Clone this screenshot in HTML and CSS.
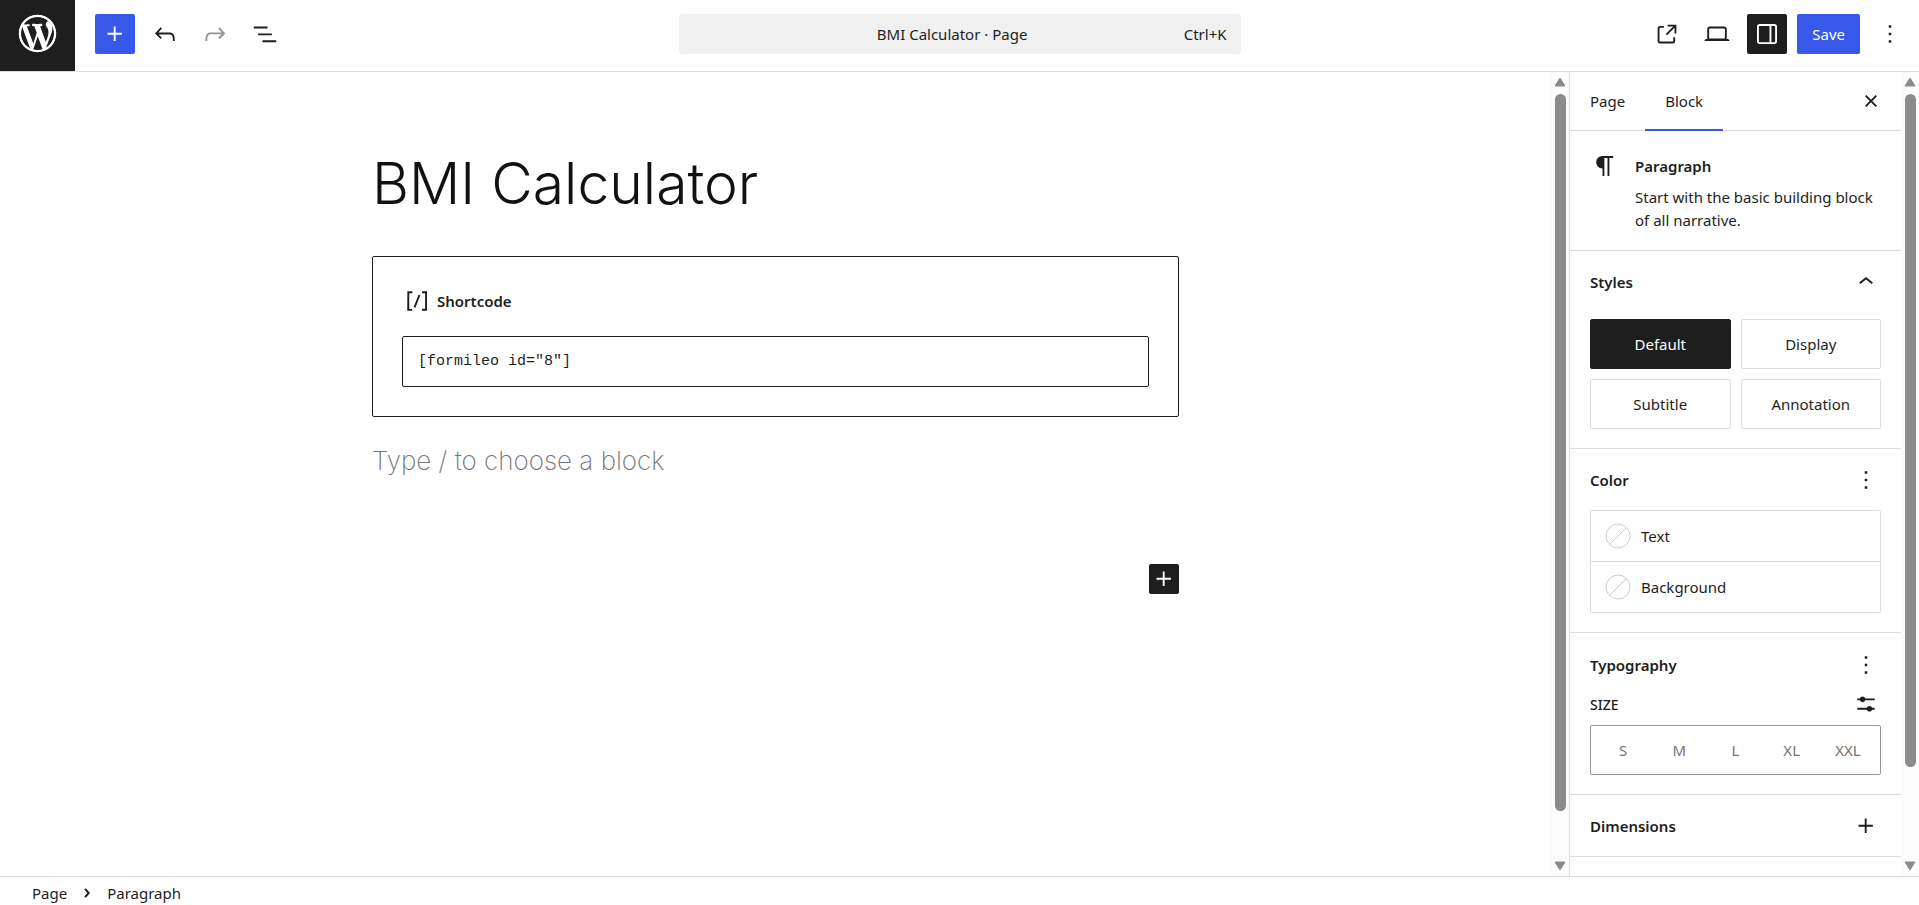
FILE: index.html
```html
<!DOCTYPE html>
<html lang="en">
<head>
    <meta charset="UTF-8">
    <meta name="viewport" content="width=device-width, initial-scale=1.0">
    <title>Edit Page - BMI Calculator</title>
    <link rel="stylesheet" href="styles.css">
</head>
<body>
    <header class="header">
        <div class="header-left">
            <a class="site-logo" href="#" aria-label="View Pages">
                <svg viewBox="-2 -2 24 24"><path d="M20 10c0-5.51-4.49-10-10-10C4.48 0 0 4.49 0 10c0 5.52 4.48 10 10 10 5.51 0 10-4.48 10-10zM7.78 15.37L4.37 6.22c.55-.02 1.17-.08 1.17-.08.5-.06.44-1.13-.06-1.11 0 0-1.45.11-2.37.11-.18 0-.37 0-.58-.01C4.12 2.69 6.87 1.11 10 1.11c2.33 0 4.45.87 6.05 2.34-.68-.11-1.65.39-1.65 1.58 0 .74.45 1.36.9 2.1.35.61.55 1.36.55 2.46 0 1.49-1.4 5-1.4 5l-3.03-8.37c.54-.02.82-.17.82-.17.5-.05.44-1.25-.06-1.22 0 0-1.44.12-2.38.12-.87 0-2.33-.12-2.33-.12-.5-.03-.56 1.2-.06 1.22l.92.08 1.26 3.41zM17.41 10c.24-.64.74-1.87.43-4.25.7 1.29 1.05 2.71 1.05 4.25 0 3.29-1.73 6.24-4.4 7.78.97-2.59 1.94-5.2 2.92-7.78zM6.1 18.09C3.12 16.65 1.11 13.53 1.11 10c0-1.3.23-2.48.72-3.59C3.25 10.3 4.67 14.2 6.1 18.09zm4.03-6.63l2.58 6.98c-.86.29-1.76.45-2.71.45-.79 0-1.57-.11-2.29-.33.81-2.38 1.62-4.74 2.42-7.1z"/><circle class="logo-ring" cx="10" cy="10" r="9.3"/></svg>
            </a>
            <div class="toolbar">
                <button class="icon-btn primary" aria-label="Block Inserter">
                    <svg viewBox="0 0 24 24"><path d="M11 12.5V17.5H12.5V12.5H17.5V11H12.5V6H11V11H6V12.5H11Z"/></svg>
                </button>
                <button class="icon-btn" aria-label="Undo">
                    <svg viewBox="0 0 24 24"><path d="M18.3 11.7c-.6-.6-1.4-.9-2.3-.9H6.7l2.9-3.3-1.1-1-4.5 5L8.5 16l1-1-2.7-2.7H16c.5 0 .9.2 1.3.5 1 1 1 3.4 1 4.5v.3h1.5v-.2c0-1.5 0-4.3-1.5-5.7z"/></svg>
                </button>
                <button class="icon-btn" aria-label="Redo" disabled>
                    <svg viewBox="0 0 24 24"><path d="M15.6 6.5l-1.1 1 2.9 3.3H8c-.9 0-1.7.3-2.3.9-1.4 1.5-1.4 4.2-1.4 5.6v.2h1.5v-.3c0-1.1 0-3.5 1-4.5.3-.3.7-.5 1.3-.5h9.2L14.5 15l1.1 1.1 4.6-4.6-4.6-5z"/></svg>
                </button>
                <button class="icon-btn" aria-label="Document Overview">
                    <svg viewBox="0 0 24 24"><path d="M3 6h11v1.5H3V6Zm3.5 5.5h11V13h-11v-1.5ZM21 17H10v1.5h11V17Z"/></svg>
                </button>
            </div>
        </div>

        <button class="document-bar">
            <span class="document-title">BMI Calculator · Page</span>
            <span>Ctrl+K</span>
        </button>

        <div class="header-right">
            <button class="icon-btn" aria-label="View Page">
                <svg viewBox="0 0 24 24"><path d="M19.5 4.5h-7V6h4.44l-5.97 5.97 1.06 1.06L18 7.06v4.44h1.5v-7Zm-13 1a2 2 0 0 0-2 2v10a2 2 0 0 0 2 2h10a2 2 0 0 0 2-2v-3H17v3a.5.5 0 0 1-.5.5h-10a.5.5 0 0 1-.5-.5v-10a.5.5 0 0 1 .5-.5h3V5.5h-3Z"/></svg>
            </button>
            <button class="icon-btn" aria-label="View">
                <svg viewBox="0 0 24 24"><path d="M20.5 16h-.7V8c0-1.1-.9-2-2-2H6.2c-1.1 0-2 .9-2 2v8h-.7c-.8 0-1.5.7-1.5 1.5h20c0-.8-.7-1.5-1.5-1.5zM5.7 8c0-.3.2-.5.5-.5h11.6c.3 0 .5.2.5.5v7.6H5.7V8z"/></svg>
            </button>
            <button class="icon-btn pressed" aria-label="Settings" aria-pressed="true">
                <svg viewBox="0 0 24 24"><path d="M18 4H6c-1.1 0-2 .9-2 2v12c0 1.1.9 2 2 2h12c1.1 0 2-.9 2-2V6c0-1.1-.9-2-2-2zm-4 14.5H6c-.3 0-.5-.2-.5-.5V6c0-.3.2-.5.5-.5h8v13zm4.5-.5c0 .3-.2.5-.5.5h-2.5v-13H18c.3 0 .5.2.5.5v12z"/></svg>
            </button>
            <button class="save-btn">Save</button>
            <button class="icon-btn" aria-label="Options">
                <svg viewBox="0 0 24 24"><path d="M13 19h-2v-2h2v2zm0-6h-2v-2h2v2zm0-6h-2V5h2v2z"/></svg>
            </button>
        </div>
    </header>

    <div class="body">
        <main class="editor">
            <div class="canvas">
                <div class="content">
                    <h1 class="post-title">BMI Calculator</h1>
                    <div class="shortcode">
                        <label class="shortcode-label" for="shortcode-input">
                            <svg viewBox="0 0 24 24"><path d="M16 4.2v1.5h2.5v12.5H16v1.5h4V4.2h-4zM4.2 19.8h4v-1.5H5.8V5.8h2.5V4.2h-4l-.1 15.6zm5.1-3.1l1.4.6 4-10-1.4-.6-4 10z"/></svg>
                            Shortcode
                        </label>
                        <input class="shortcode-input" id="shortcode-input" type="text" value='[formileo id="8"]'>
                    </div>
                    <p class="placeholder">Type / to choose a block</p>
                    <button class="appender" aria-label="Add block">
                        <svg viewBox="0 0 24 24"><path d="M11 12.5V17.5H12.5V12.5H17.5V11H12.5V6H11V11H6V12.5H11Z"/></svg>
                    </button>
                </div>
            </div>
            <div class="scrollbar" aria-hidden="true">
                <svg viewBox="0 0 12 10"><path d="M6 1L11 9H1z"/></svg>
                <div class="track"><div class="thumb" style="height: 94.3%"></div></div>
                <svg viewBox="0 0 12 10"><path d="M6 9L11 1H1z"/></svg>
            </div>
        </main>

        <aside class="sidebar">
            <div class="sidebar-content">
                <div class="tabs" role="tablist">
                    <button class="tab" role="tab">Page</button>
                    <button class="tab active" role="tab" aria-selected="true">Block</button>
                    <button class="small-btn close" aria-label="Close Settings">
                        <svg viewBox="0 0 24 24"><path d="M12 13.06l3.712 3.713 1.061-1.06L13.061 12l3.712-3.712-1.06-1.06L12 10.938 8.288 7.227l-1.061 1.06L10.939 12l-3.712 3.712 1.06 1.061L12 13.061z"/></svg>
                    </button>
                </div>

                <section class="block-card">
                    <svg viewBox="0 0 24 24"><path d="m9.99609 14v-.2251l.00391.0001v6.225h1.5v-14.5h2.5v14.5h1.5v-14.5h3v-1.5h-8.50391c-2.76142 0-5 2.23858-5 5 0 2.7614 2.23858 5 5 5z"/></svg>
                    <div>
                        <h2 class="heading">Paragraph</h2>
                        <p class="description">Start with the basic building block of all narrative.</p>
                    </div>
                </section>

                <section class="panel">
                    <div class="panel-header">
                        <h2 class="heading">Styles</h2>
                        <button class="small-btn" aria-label="Toggle styles" aria-expanded="true">
                            <svg viewBox="0 0 24 24"><path d="M6.5 12.4L12 8l5.5 4.4-.9 1.2L12 10l-4.5 3.6-1-1.2z"/></svg>
                        </button>
                    </div>
                    <div class="style-grid">
                        <button class="style-btn selected">Default</button>
                        <button class="style-btn">Display</button>
                        <button class="style-btn">Subtitle</button>
                        <button class="style-btn">Annotation</button>
                    </div>
                </section>

                <section class="panel">
                    <div class="panel-header">
                        <h2 class="heading">Color</h2>
                        <button class="small-btn" aria-label="Color options">
                            <svg viewBox="0 0 24 24"><path d="M13 19h-2v-2h2v2zm0-6h-2v-2h2v2zm0-6h-2V5h2v2z"/></svg>
                        </button>
                    </div>
                    <div class="color-list">
                        <button class="color-item">
                            <svg viewBox="0 0 26 26"><circle cx="13" cy="13" r="12"/><path d="M5 21L21 5"/></svg>
                            Text
                        </button>
                        <button class="color-item">
                            <svg viewBox="0 0 26 26"><circle cx="13" cy="13" r="12"/><path d="M5 21L21 5"/></svg>
                            Background
                        </button>
                    </div>
                </section>

                <section class="panel">
                    <div class="panel-header compact">
                        <h2 class="heading">Typography</h2>
                        <button class="small-btn" aria-label="Typography options">
                            <svg viewBox="0 0 24 24"><path d="M13 19h-2v-2h2v2zm0-6h-2v-2h2v2zm0-6h-2V5h2v2z"/></svg>
                        </button>
                    </div>
                    <div class="size-header">
                        <h3 class="size-label">SIZE</h3>
                        <button class="small-btn" aria-label="Set custom size">
                            <svg viewBox="0 0 24 24"><path d="m19 7.5h-7.628c-.3089-.87389-1.1423-1.5-2.122-1.5-.97966 0-1.81309.62611-2.12197 1.5h-2.12803v1.5h2.12803c.30888.87389 1.14231 1.5 2.12197 1.5.9797 0 1.8131-.62611 2.122-1.5h7.628z"/><path d="m19 15h-2.128c-.3089-.8739-1.1423-1.5-2.122-1.5s-1.8131.6261-2.122 1.5h-7.628v1.5h7.628c.3089.8739 1.1423 1.5 2.122 1.5s1.8131-.6261 2.122-1.5h2.128z"/></svg>
                        </button>
                    </div>
                    <div class="size-group">
                        <button class="size-btn">S</button>
                        <button class="size-btn">M</button>
                        <button class="size-btn">L</button>
                        <button class="size-btn">XL</button>
                        <button class="size-btn">XXL</button>
                    </div>
                </section>

                <section class="panel collapsed">
                    <div class="panel-header">
                        <h2 class="heading">Dimensions</h2>
                        <button class="small-btn" aria-label="Dimensions options">
                            <svg viewBox="0 0 24 24"><path d="M11 12.5V17.5H12.5V12.5H17.5V11H12.5V6H11V11H6V12.5H11Z"/></svg>
                        </button>
                    </div>
                </section>
            </div>
            <div class="scrollbar" aria-hidden="true">
                <svg viewBox="0 0 12 10"><path d="M6 1L11 9H1z"/></svg>
                <div class="track"><div class="thumb" style="height: 88.5%"></div></div>
                <svg viewBox="0 0 12 10"><path d="M6 9L11 1H1z"/></svg>
            </div>
        </aside>
    </div>

    <footer class="footer">
        <a class="crumb" href="#">Page</a>
        <svg viewBox="0 0 24 24"><path d="M10.8 7.2L15 12l-4.2 4.8-1.5-1.3L12.400 12 9.300 8.500z"/></svg>
        <span class="crumb">Paragraph</span>
    </footer>
</body>
</html>
```
FILE: styles.css
```css
* {
    box-sizing: border-box;
}
body {
    margin: 0;
    height: 100vh;
    display: flex;
    flex-direction: column;
    overflow: hidden;
    background: #fff;
    color: #1e1e1e;
    font-family: "Noto Sans", "Open Sans", sans-serif;
    font-size: 15px;
    line-height: 23px;
}
button {
    padding: 0;
    border: none;
    border-radius: 2px;
    background: none;
    color: inherit;
    font: inherit;
    cursor: pointer;
}
svg {
    display: block;
    flex: none;
    width: 30px;
    height: 30px;
    fill: currentColor;
}
h1, h2, h3, p {
    margin: 0;
}

/* Header */
.header {
    display: grid;
    grid-template-columns: 1fr 562px 1fr;
    height: 72px;
    flex: none;
    border-bottom: 1px solid #ddd;
}
.header-left {
    display: flex;
}
.site-logo {
    display: flex;
    justify-content: center;
    width: 75px;
    padding-top: 11px;
    background: #1e1e1e;
    color: #fff;
}
.site-logo svg {
    width: 45px;
    height: 45px;
}
.logo-ring {
    fill: none;
    stroke: currentColor;
}
.toolbar {
    display: flex;
    gap: 10px;
    padding: 14px 20px;
}
.icon-btn {
    display: flex;
    align-items: center;
    justify-content: center;
    width: 40px;
    height: 40px;
}
.icon-btn:disabled {
    color: #949494;
}
.icon-btn.primary,
.save-btn {
    background: #3858e9;
    color: #fff;
}
.icon-btn.pressed {
    background: #1e1e1e;
    color: #fff;
}
.document-bar {
    display: flex;
    align-items: center;
    height: 40px;
    margin-top: 14px;
    padding: 0 14px 0 42px;
    border-radius: 4px;
    background: #f0f0f0;
}
.document-title {
    flex: 1;
}
.header-right {
    display: flex;
    justify-content: flex-end;
    gap: 10px;
    padding: 14px 9px;
}
.save-btn {
    height: 40px;
    padding: 0 15px;
}

/* Editor */
.body {
    display: flex;
    flex: 1;
    min-height: 0;
}
.editor {
    display: flex;
    flex: 1;
    min-width: 0;
}
.canvas {
    flex: 1;
    padding: 76px 20px 0;
}
.content {
    display: flex;
    flex-direction: column;
    max-width: 807px;
    margin: 0 auto;
}
.post-title {
    margin-bottom: 36px;
    color: #111;
    font-family: Inter, sans-serif;
    font-size: 57px;
    font-weight: 300;
    line-height: 72px;
}
.shortcode {
    padding: 29px;
    border: 1px solid #1e1e1e;
    border-radius: 2px;
}
.shortcode-label {
    display: flex;
    align-items: center;
    gap: 5px;
    margin-bottom: 20px;
    font-size: 15px;
    font-weight: 600;
}
.shortcode-input {
    display: block;
    width: 100%;
    height: 51px;
    padding: 0 15px;
    border: 1px solid #1e1e1e;
    border-radius: 2px;
    color: #1e1e1e;
    font-family: "Liberation Mono", monospace;
    font-size: 15px;
}
.placeholder {
    margin-top: 24px;
    color: #757575;
    font-family: Inter, sans-serif;
    font-size: 26px;
    font-weight: 200;
    line-height: 40px;
}
.appender {
    display: flex;
    align-self: flex-end;
    margin-top: 83px;
    background: #1e1e1e;
    color: #fff;
}

/* Scrollbars */
.scrollbar {
    display: flex;
    flex: none;
    flex-direction: column;
    align-items: center;
    width: 18px;
    padding: 5px 0;
    background: #fcfcfc;
    color: #8b8b8b;
}
.scrollbar svg {
    width: 12px;
    height: 10px;
    stroke: currentColor;
    stroke-linejoin: round;
}
.track {
    flex: 1;
    width: 11px;
    margin: 7px 0;
}
.thumb {
    border-radius: 6px;
    background: #8b8b8b;
}

/* Sidebar */
.sidebar {
    display: flex;
    flex: none;
    width: 350px;
    border-left: 1px solid #ddd;
}
.sidebar-content {
    flex: 1;
    min-width: 0;
    overflow: hidden;
}
.tabs {
    display: flex;
    height: 59px;
    border-bottom: 1px solid #ddd;
}
.tab {
    height: 59px;
    padding: 2px 20px 0;
    border-bottom: 2px solid transparent;
    border-radius: 0;
}
.tab.active {
    border-color: #3858e9;
}
.small-btn {
    display: flex;
}
.close {
    align-self: center;
    margin-left: auto;
    margin-right: 15px;
}
.block-card {
    display: flex;
    gap: 15px;
    padding: 20px 20px 18px;
    border-bottom: 1px solid #ddd;
}
.heading {
    font-size: 15px;
    font-weight: 600;
    line-height: 30px;
}
.description {
    margin-top: 5px;
}
.panel {
    padding: 0 20px 19px;
    border-bottom: 1px solid #ddd;
}
.panel.collapsed {
    padding-bottom: 0;
}
.panel-header {
    display: flex;
    align-items: center;
    justify-content: space-between;
    height: 61px;
}
.panel-header.compact {
    height: 56px;
    padding-top: 8px;
}
.style-grid {
    display: grid;
    grid-template-columns: 1fr 1fr;
    gap: 10px;
    margin-top: 7px;
}
.style-btn {
    height: 50px;
    border: 1px solid #ddd;
}
.style-btn.selected {
    border-color: #1e1e1e;
    background: #1e1e1e;
    color: #fff;
}
.color-list {
    border: 1px solid #ddd;
    border-radius: 2px;
}
.color-item {
    display: flex;
    align-items: center;
    gap: 10px;
    width: 100%;
    height: 50px;
    padding: 0 14px;
}
.color-item + .color-item {
    height: 51px;
    border-top: 1px solid #ddd;
    border-radius: 0;
}
.color-item svg {
    width: 26px;
    height: 26px;
    fill: none;
    stroke: #ccc;
}
.size-header {
    display: flex;
    align-items: center;
    justify-content: space-between;
    height: 30px;
    margin-bottom: 6px;
}
.size-label {
    font-size: 14px;
    font-weight: 500;
}
.size-group {
    display: grid;
    grid-template-columns: repeat(5, 1fr);
    height: 50px;
    padding: 0 4px;
    border: 1px solid #949494;
    border-radius: 2px;
    color: #757575;
}

/* Footer */
.footer {
    display: flex;
    align-items: center;
    gap: 5px;
    height: 29px;
    padding: 4px 32px 0;
    flex: none;
    border-top: 1px solid #ddd;
}
.footer svg {
    width: 30px;
    height: 24px;
}
.crumb {
    color: inherit;
    text-decoration: none;
}
```
